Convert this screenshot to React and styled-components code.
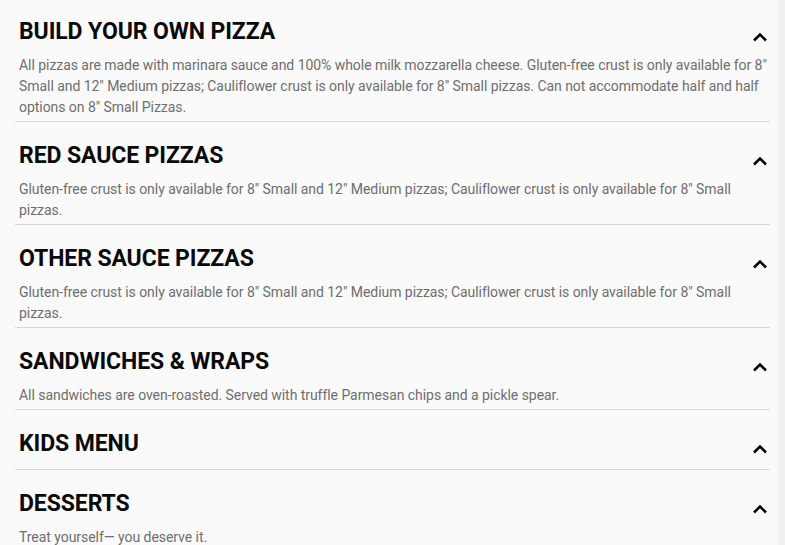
import React from "react";
import styled, { createGlobalStyle } from "styled-components";

const GlobalStyle = createGlobalStyle`
  html, body {
    margin: 0;
    padding: 0;
    background: #fafafa;
    font-family: Roboto, "Liberation Sans", Arial, sans-serif;
  }
`;

const Page = styled.div`
  display: flex;
  min-height: 545px;
`;

const Menu = styled.div`
  flex: 1;
  margin-top: -1px;
  padding: 0 8px 0 15px;
`;

const Track = styled.div`
  width: 7px;
  background: #f1f1f1;
`;

const Section = styled.section`
  border-bottom: 1px solid #d6d6d6;
  padding: 0 0 0 4px;

  &:first-child > div:first-child {
    padding-top: 17px;
  }
`;

const Header = styled.div`
  display: flex;
  justify-content: space-between;
  align-items: flex-start;
  padding-top: 18px;
  padding-bottom: ${(p) => (p.$hasDesc ? "8px" : "10px")};
`;

const Title = styled.h2`
  margin: 0;
  font-size: 23px;
  line-height: 31px;
  font-weight: 700;
  color: #0a0a0a;
  text-transform: uppercase;
  letter-spacing: -0.1px;
`;

const Toggle = styled.button`
  border: none;
  background: none;
  padding: 0;
  margin-top: 16px;
  width: 20px;
  height: 10px;
  display: flex;
  align-items: center;
  justify-content: center;
  color: #000;
  cursor: pointer;
`;

const Desc = styled.p`
  margin: 0;
  padding-bottom: 3px;
  font-size: 14px;
  line-height: 21px;
  letter-spacing: -0.05px;
  color: #6e6e6e;
`;

const Chevron = () => (
  <svg width="16" height="10" viewBox="0 0 16 10" fill="none">
    <polyline
      points="2,8.5 8,2.6 14,8.5"
      stroke="currentColor"
      strokeWidth="2.5"
    />
  </svg>
);

const sections = [
  {
    title: "Build Your Own Pizza",
    desc: 'All pizzas are made with marinara sauce and 100% whole milk mozzarella cheese. Gluten-free crust is only available for 8" Small and 12" Medium pizzas; Cauliflower crust is only available for 8" Small pizzas. Can not accommodate half and half options on 8" Small Pizzas.',
  },
  {
    title: "Red Sauce Pizzas",
    desc: 'Gluten-free crust is only available for 8" Small and 12" Medium pizzas; Cauliflower crust is only available for 8" Small pizzas.',
  },
  {
    title: "Other Sauce Pizzas",
    desc: 'Gluten-free crust is only available for 8" Small and 12" Medium pizzas; Cauliflower crust is only available for 8" Small pizzas.',
  },
  {
    title: "Sandwiches & Wraps",
    desc: "All sandwiches are oven-roasted. Served with truffle Parmesan chips and a pickle spear.",
  },
  { title: "Kids Menu" },
  { title: "Desserts", desc: "Treat yourself\u2014 you deserve it." },
];

const App = () => {
  return (
    <>
      <GlobalStyle />
      <Page>
        <Menu>
          {sections.map((s) => (
            <Section key={s.title}>
              <Header $hasDesc={!!s.desc}>
                <Title>{s.title}</Title>
                <Toggle aria-label="Collapse">
                  <Chevron />
                </Toggle>
              </Header>
              {s.desc && <Desc>{s.desc}</Desc>}
            </Section>
          ))}
        </Menu>
        <Track />
      </Page>
    </>
  );
};

export default App;
